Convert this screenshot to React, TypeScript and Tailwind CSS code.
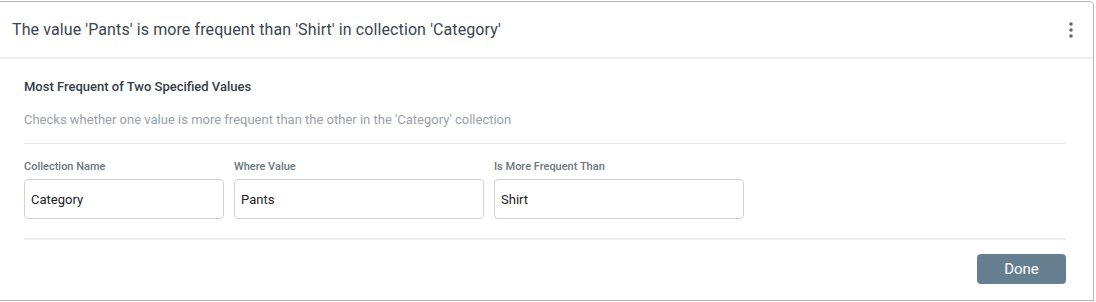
import { useState } from "react";

function Field({ label, value, width }: { label: string; value: string; width: string }) {
  const [v, setV] = useState(value);
  return (
    <div className="flex flex-col">
      <label className="text-[11px] font-medium text-[#6b757e] leading-none mb-[7px]">{label}</label>
      <input
        value={v}
        onChange={(e) => setV(e.target.value)}
        className={`${width} h-[40px] rounded-[4px] border border-[#cfd3d6] px-[6px] text-[13px] text-[#222] outline-none bg-white`}
      />
    </div>
  );
}

export default function App() {
  return (
    <div className="w-[1096px] h-[302px] bg-white font-['Roboto',sans-serif] pt-px pr-[2px]">
      <div className="h-[300px] border-t border-r border-b border-[#b5b8ba] rounded-tr-[5px] flex flex-col">
        {/* Header */}
        <div className="h-[57px] shrink-0 flex items-center justify-between pl-[12px] pr-[20px] border-b-2 border-[#eeeeee]">
          <span className="text-[16px] text-[#3a4550] tracking-[0.1px]">
            The value 'Pants' is more frequent than 'Shirt' in collection 'Category'
          </span>
          <svg width="4" height="16" viewBox="0 0 4 16" className="fill-[#666]">
            <circle cx="2" cy="2" r="1.8" />
            <circle cx="2" cy="8" r="1.8" />
            <circle cx="2" cy="14" r="1.8" />
          </svg>
        </div>

        {/* Body */}
        <div className="px-[24px] pr-[27px] pt-[21px]">
          <h2 className="text-[13px] font-medium text-[#333d47] leading-none">Most Frequent of Two Specified Values</h2>
          <p className="text-[13px] text-[#9aa1a7] leading-none mt-[20px]">
            Checks whether one value is more frequent than the other in the 'Category' collection
          </p>
          <div className="h-px bg-[#e6e6e6] mt-[17px]" />

          <div className="flex gap-[10px] mt-[17px]">
            <Field label="Collection Name" value="Category" width="w-[200px]" />
            <Field label="Where Value" value="Pants" width="w-[250px]" />
            <Field label="Is More Frequent Than" value="Shirt" width="w-[250px]" />
          </div>

          <div className="h-[2px] bg-[#eeeeee] mt-[19px]" />

          <div className="flex justify-end mt-[14px]">
            <button className="w-[89px] h-[30px] rounded-[4px] bg-[#667f90] text-white text-[15px]">Done</button>
          </div>
        </div>
      </div>
    </div>
  );
}
